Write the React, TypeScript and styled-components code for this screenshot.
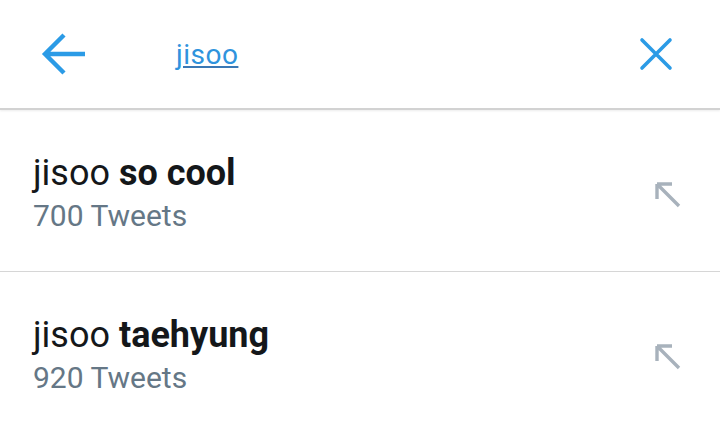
import React from "react";
import styled, { createGlobalStyle } from "styled-components";

const Global = createGlobalStyle`
  html, body { margin: 0; padding: 0; background: #ffffff; }
  body { font-family: Roboto, "Liberation Sans", Arial, sans-serif; }
`;

const Page = styled.div`
  width: 720px;
  height: 433px;
  overflow: hidden;
  background: #ffffff;
`;

const Header = styled.header`
  height: 110px;
  display: flex;
  align-items: center;
  border-bottom: 2px solid #d2d2d2;
  box-shadow: 0 1px 2px rgba(0, 0, 0, 0.08);
  box-sizing: border-box;
  position: relative;
`;

const IconButton = styled.button<{ $ml?: number; $mr?: number }>`
  margin-left: ${(p) => p.$ml ?? 0}px;
  margin-right: ${(p) => p.$mr ?? 0}px;
  padding: 0;
  border: 0;
  background: transparent;
  display: flex;
  align-items: center;
  justify-content: center;
  color: #2b9be6;
`;

const Query = styled.span`
  margin-left: 89px;
  flex: 1;
  font-size: 28px;
  letter-spacing: 0.5px;
  color: #2f93dd;
  text-decoration: underline;
  text-decoration-color: #3a78b5;
  text-decoration-thickness: 2px;
  text-underline-offset: 2px;
  line-height: 32px;
  margin-top: 1px;
`;

const List = styled.div`
  display: flex;
  flex-direction: column;
`;

const Row = styled.div<{ $last?: boolean }>`
  height: 162px;
  box-sizing: border-box;
  display: flex;
  align-items: flex-start;
  padding: 41px 0 0 33px;
  border-bottom: ${(p) => (p.$last ? "none" : "1px solid #d6d6d6")};
`;

const TextCol = styled.div`
  flex: 1;
  display: flex;
  flex-direction: column;
`;

const Title = styled.div`
  font-size: 36px;
  line-height: 44px;
  color: #14171a;
  b { font-weight: 700; }
`;

const Sub = styled.div`
  margin-top: 3px;
  font-size: 30px;
  line-height: 36px;
  color: #657786;
`;

const FillArrow = styled.div`
  margin: 31px 39px 0 0;
  display: flex;
  color: #a8b2bc;
`;

const BackArrow = () => (
  <svg width="46" height="44" viewBox="0 0 46 44" fill="none">
    <path d="M23 3 L4 22 L23 41 M4 22 H44" stroke="currentColor" strokeWidth="4.4" strokeLinecap="butt" strokeLinejoin="miter" />
  </svg>
);

const CloseIcon = () => (
  <svg width="34" height="34" viewBox="0 0 34 34" fill="none">
    <path d="M3 3 L31 31 M31 3 L3 31" stroke="currentColor" strokeWidth="3.6" strokeLinecap="round" />
  </svg>
);

const NorthWest = () => (
  <svg width="26" height="26" viewBox="0 0 26 26" fill="none">
    <path d="M3 3 L24 24 M2 2 V17 M2 2 H17" stroke="currentColor" strokeWidth="3.4" strokeLinecap="butt" />
  </svg>
);

const items = [
  { bold: "so cool", count: "700 Tweets" },
  { bold: "taehyung", count: "920 Tweets" },
];

export default function App() {
  return (
    <Page>
      <Global />
      <Header>
        <IconButton $ml={41} aria-label="Back">
          <BackArrow />
        </IconButton>
        <Query>jisoo</Query>
        <IconButton $mr={47} aria-label="Clear">
          <CloseIcon />
        </IconButton>
      </Header>
      <List>
        {items.map((it, i) => (
          <Row key={it.bold} $last={i === items.length - 1}>
            <TextCol>
              <Title>
                jisoo <b>{it.bold}</b>
              </Title>
              <Sub>{it.count}</Sub>
            </TextCol>
            <FillArrow>
              <NorthWest />
            </FillArrow>
          </Row>
        ))}
      </List>
    </Page>
  );
}
